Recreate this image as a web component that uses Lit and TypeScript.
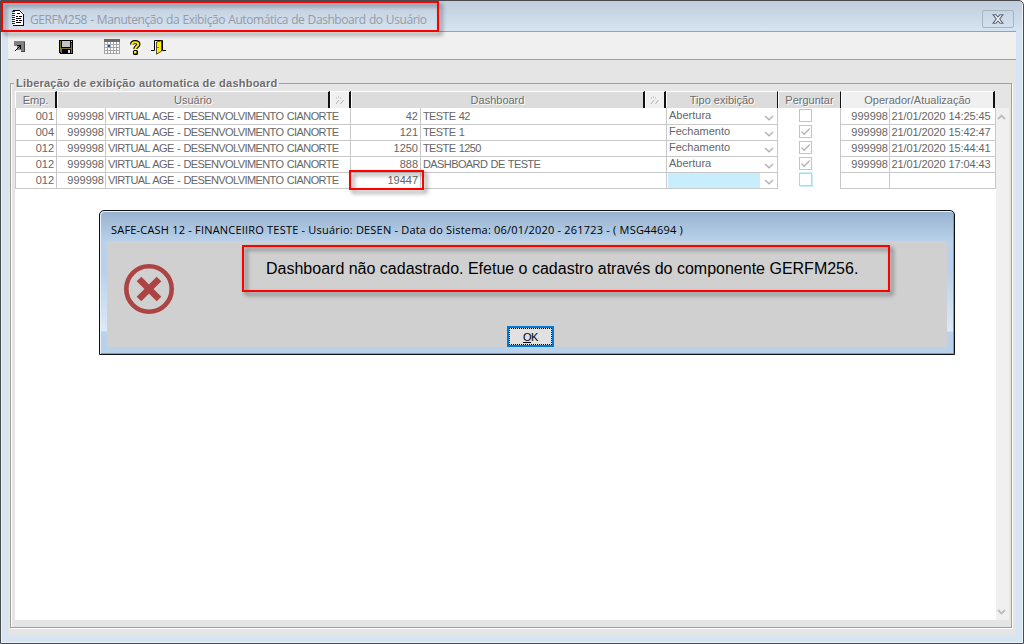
import { LitElement, html, css, svg, nothing } from "lit";
import { customElement } from "lit/decorators.js";
import { classMap } from "lit/directives/class-map.js";

interface Row {
  emp: string;
  dash: string;
  name: string;
  tipo: string;
  check: boolean;
  op: string;
  date: string;
}

const ROWS: Row[] = [
  { emp: "001", dash: "42", name: "TESTE 42", tipo: "Abertura", check: false, op: "999998", date: "21/01/2020 14:25:45" },
  { emp: "004", dash: "121", name: "TESTE 1", tipo: "Fechamento", check: true, op: "999998", date: "21/01/2020 15:42:47" },
  { emp: "012", dash: "1250", name: "TESTE 1250", tipo: "Fechamento", check: true, op: "999998", date: "21/01/2020 15:44:41" },
  { emp: "012", dash: "888", name: "DASHBOARD DE TESTE", tipo: "Abertura", check: true, op: "999998", date: "21/01/2020 17:04:43" },
  { emp: "012", dash: "19447", name: "", tipo: "", check: false, op: "", date: "" },
];

const docIcon = svg`<svg class="doc" width="14" height="17" viewBox="0 0 14 17" shape-rendering="crispEdges">
  <path d="M2 0h8v1h1v1h1v1h1v13H2z" fill="#fff"/>
  <path d="M2 0h7v1H2zM9 1h1v1H9zM10 2h1v1h-1zM11 3h1v1h-1zM12 4h1v12h-1zM2 15h11v1H2z" fill="#111"/>
  <path d="M1 1h3v1H1zM1 3h3v1H1zM1 5h3v1H1zM1 7h3v1H1zM1 9h3v1H1zM1 11h3v1H1zM1 13h3v1H1z" fill="#222"/>
  <path d="M6 3h3v1H6zM5 6h2v1H5zM8 6h3v1H8zM5 8h5v1H5zM5 10h2v1H5zM8 10h3v1H8zM5 12h5v1H5z" fill="#000"/>
</svg>`;

const cornerIcon = svg`<svg width="12" height="12" viewBox="0 0 12 12" shape-rendering="crispEdges">
  <path d="M0 0h11v11H7V9H3V5H0z" fill="#808080"/>
  <path d="M10 1h1v10h-1zM7 10h4v1H7z" fill="#444"/>
  <path d="M3 4h4v4H6V6H5v1H4v1H3v1H2v1H1V9h1V8h1V7h1V6h1V5H3z" fill="#000"/>
</svg>`;

const saveIcon = svg`<svg width="14" height="14" viewBox="0 0 14 14" shape-rendering="crispEdges">
  <path d="M0 0h14v14H1v-1H0z" fill="#000"/>
  <path d="M1 1h1v11H1zM12 3h1v10h-1zM2 8h10v1H2zM2 9h1v4H2z" fill="#77752c"/>
  <path d="M3 1h8v6H3z" fill="#c4c4c4"/><path d="M12 1h1v1h-1z" fill="#ccc"/>
  <path d="M9 10h2v3H9z" fill="#ddd"/>
</svg>`;

const calendarIcon = svg`<svg width="16" height="15" viewBox="0 0 16 15" shape-rendering="crispEdges">
  <path d="M0 0h16v15H0z" fill="#a5a5a5"/><path d="M0 0h16v3H0z" fill="#6b6b6b"/>
  ${[0, 1, 2, 3].map((r) => [0, 1, 2, 3, 4].map((c) => svg`<rect x=${1 + c * 3} y=${3 + r * 3} width="2" height="2" fill="#fff"/>`))}
  <path d="M4 6h2v2H4z" fill="#0a61ac"/>
</svg>`;

const helpIcon = svg`<svg width="11" height="15" viewBox="0 0 11 15">
  <path d="M2 4.500C2 2.600 3.400 2 5.200 2S8.500 2.800 8.500 4.500 5.300 6.800 5.300 9" fill="none" stroke="#000" stroke-width="4"/>
  <rect x="3" y="10" width="5" height="5" rx="1.500" fill="#000"/>
  <path d="M2 4.700C2 2.800 3.400 2.300 5.200 2.300S8.300 3 8.300 4.600 5.300 6.600 5.300 9" fill="none" stroke="#ffee00" stroke-width="2"/>
  <rect x="4" y="11" width="2.500" height="2.500" fill="#ffee00"/>
</svg>`;

const doorIcon = svg`<svg width="15" height="15" viewBox="0 0 15 15">
  <path d="M0 10.500h3.500V.5h8v10H15" fill="none" stroke="#000"/>
  <path d="M5.500 2l5-1.300v10.500l-5 3z" fill="#ffee00" stroke="#222" stroke-width=".8"/>
  <path d="M6.500 7.500h1" stroke="#000"/>
</svg>`;

const sparkle = svg`<svg width="10" height="9" viewBox="0 0 10 9">
  <path d="M1 2h1M3 1h1M5 2h1" stroke="#aaa"/><path d="M1 8l3-4M5.500 8l3-4" stroke="#aaa" stroke-width=".9"/>
</svg>`;

const chevron = svg`<svg class="chev" width="10" height="6" viewBox="0 0 10 6"><path d="M1 1l4 3.700L9 1" fill="none" stroke="#b2b2b2" stroke-width="1.400"/></svg>`;

@customElement("app-root")
export class AppRoot extends LitElement {
  static styles = css`
    :host { display: block; width: 1024px; height: 644px; font-family: "Liberation Sans", Arial, sans-serif; }
    * { box-sizing: border-box; }
    svg { display: block; flex: none; }
    .window {
      position: relative; height: 644px; display: flex; flex-direction: column; overflow: hidden;
      border: 1px solid #4b4a4e; border-radius: 0 5px 0 0; padding: 0 7px 7px;
      background: linear-gradient(#bfcddd, #d7e4f2 31px);
      box-shadow: inset 1px 0 #eaf1f8, inset -1px -1px #eaf1f8;
    }
    .title { height: 30px; flex: none; display: flex; align-items: center; padding: 5px 1px 0 3px; }
    .title .text { margin: 2px 0 0 5px; font: 12px/16px "Open Sans", sans-serif; color: #949ca6; white-space: nowrap; flex: 1; letter-spacing: -.42px; word-spacing: .5px; }
    .close {
      width: 32px; height: 18px; border: 1px solid #a6b3c2; border-radius: 2px; margin: 0 1px 0 0;
      display: flex; align-items: center; justify-content: center;
    }
    .client { flex: 1; display: flex; flex-direction: column; background: #e5e5e5; border-top: 1px solid #a0a0a0; }
    .toolbar { height: 28px; flex: none; background: #f0f0f0; border-bottom: 1px solid #a0a0a0; display: flex; align-items: flex-start; padding: 8px 0 0 6px; }
    .toolbar .i1 { margin: 1px 33px 0 0; }
    .toolbar .i2 { margin-right: 31px; }
    .toolbar .i3 { margin: -1px 10px 0 0; }
    .toolbar .i4 { margin-right: 10px; }
    fieldset {
      margin: 16px 4px 8px 2px; padding: 0 2px 7px 4px; flex: 1; min-width: 0; min-inline-size: 0;
      border: 1px solid #a0a0a0; box-shadow: 1px 1px #fff, inset 1px 0 #fff; display: block;
    }
    legend { font-size: 11px; line-height: 14px; font-weight: bold; letter-spacing: .225px; color: #6d6d6d; text-shadow: 1px 1px #fff; padding: 0 2px 0 2px; margin-left: -1px; white-space: nowrap; }
    .grid { display: grid; grid-template-columns: 981px 13px; grid-template-rows: 17px 512px; margin-top: 1px; }
    .head { display: grid; grid-template-columns: 42px 273px 21px 294px 21px 112px 63px 154px; }
    .h {
      background: #dcdcdc; border: 1px solid #a0a0a0; border-top-color: #fff; border-left-color: #fff; border-right: 2px solid #111;
      font-size: 11px; line-height: 16px; color: #6d6d6d; text-align: center; text-shadow: 1px 1px #fff; white-space: nowrap;
      display: flex; justify-content: center;
    }
    .h.btn { background: #f0f0f0; align-items: center; }
    .h.dark { border-bottom: 2px solid #222; border-right-width: 1px; }
    .h.light { background: #f0f0f0; }
    .corner { background: #e5e5e5; }
    .body { background: #fff; }
    .row { display: grid; height: 16px; grid-template-columns: 42px 49px 245px 70px 246px 111px 63px 49px 106px; font-size: 11px; line-height: 16px; color: #666; white-space: nowrap; }
    .row.last { height: 17px; }
    .c { border-right: 1px solid #c8c8c8; border-bottom: 1px solid #c8c8c8; padding: 0 2px; }
    .c:first-child { box-shadow: inset 1px 0 #c8c8c8; }
    .num { text-align: right; }
    .op { padding-right: 1px; }
    .caps { letter-spacing: -.6px; word-spacing: .85px; padding-left: 2px; }
    .date { letter-spacing: -.1px; padding-left: 1.500px; }
    .tipo { border-bottom: 0; box-shadow: inset 0 1px #c8c8c8; display: flex; justify-content: space-between; align-items: center; padding: 1px 3px 0 1px; }
    .tipo span { margin: -5px 0 0 1px; flex: 1; }
    .tipo .chev { margin-top: 2px; }
    .row:first-child .tipo { box-shadow: none; }
    .last .tipo { border-bottom: 1px solid #c8c8c8; }
    .last .tipo span { align-self: stretch; background: #c8eefe; margin: 0 4px 0 0; }
    .perg { border-bottom: 0; display: flex; padding: 1px 0 0 21px; }
    .box { width: 13px; height: 13px; border: 1px solid #c4c4c4; background: #fff; }
    .last .box { border-color: #b4d4e2; box-shadow: 1px 1px #c8eefe, 0 -1px #c8eefe; }
    .scroll { background: #f0f0f0; display: flex; flex-direction: column; justify-content: space-between; padding: 6px 0 5px 1px; }
    .mark { position: absolute; border: 2px solid #fe0000; filter: drop-shadow(3px 3px 2px rgba(0, 0, 0, .5)); }
    .mark-title { left: 0; top: 0; width: 438px; height: 31px; }
    .mark-code { left: 348px; top: 169px; width: 75px; height: 20px; }
    .mark-message { left: 241px; top: 244px; width: 648px; height: 47px; }
    .dialog {
      position: absolute; left: 98px; top: 209px; width: 856px; height: 145px; border: 1px solid #111; border-radius: 5px 5px 0 0;
      padding: 0 7px 7px; display: flex; flex-direction: column; overflow: hidden;
      box-shadow: inset 1px 1px #e8f1fa, inset -1px -1px #35bcd6;
      background: linear-gradient(#99b4d1 0 2px, #b9d1ea 30px, #b9d1ea 60px, #dce9f7 120px, #b9d1ea 121px);
    }
    .dtitle { height: 30px; flex: none; font: 11px/16px "Open Sans", sans-serif; letter-spacing: .2px; color: #000; padding: 11px 0 0 4px; white-space: nowrap; }
    .dbody { flex: 1; background: #d0d0d0; display: grid; grid-template-columns: 158px 1fr; grid-template-rows: 85px 21px; }
    .err { margin: 22px 0 0 16px; }
    .msg { font-size: 16px; line-height: 20px; color: #000; padding: 18px 0 0 1px; white-space: nowrap; }
    .ok {
      grid-column: 1 / 3; justify-self: start; margin-left: 400px; width: 47px; height: 21px; border: 2px solid #0078d7; background: #e1e1e1; padding: 1px 0 0;
      font: 11px/15px "Liberation Sans", sans-serif; letter-spacing: -.5px; color: #000; outline: 1px dotted #000; outline-offset: -3px; border-radius: 0;
    }
  `;

  private renderRow(r: Row, last: boolean) {
    return html`<div class=${classMap({ row: true, last })}>
      <div class="c num">${r.emp}</div>
      <div class="c num op">999998</div>
      <div class="c caps">VIRTUAL AGE - DESENVOLVIMENTO CIANORTE</div>
      <div class="c num">${r.dash}</div>
      <div class="c caps">${r.name}</div>
      <div class="c tipo"><span>${r.tipo}</span>${chevron}</div>
      <div class="c perg"><div class="box">${r.check
        ? svg`<svg width="11" height="11" viewBox="0 0 11 11"><path d="M1.500 5.500l2.700 2.700L9.700 2.500" fill="none" stroke="#b2b2b2" stroke-width="1.300"/></svg>`
        : nothing}</div></div>
      <div class="c num op">${r.op}</div>
      <div class="c date">${r.date}</div>
    </div>`;
  }

  render() {
    return html`<div class="window">
      <div class="title">
        ${docIcon}<span class="text">GERFM258 - Manutenção da Exibição Automática de Dashboard do Usuário</span>
        <div class="close"><svg width="12" height="10" viewBox="0 0 12 10">
          <path d="M1 .7h3l2 2.300 2-2.300h3L7.700 5 11 9.300H8L6 7 4 9.300H1L4.300 5z" fill="#f4f6f8" stroke="#5d6671" stroke-width="1.100"/></svg></div>
      </div>
      <div class="client">
        <div class="toolbar">
          <div class="i1">${cornerIcon}</div><div class="i2">${saveIcon}</div><div class="i3">${calendarIcon}</div>
          <div class="i4">${helpIcon}</div><div>${doorIcon}</div>
        </div>
        <fieldset>
          <legend>Liberação de exibição automatica de dashboard</legend>
          <div class="grid">
            <div class="head">
              <div class="h">Emp.</div><div class="h">Usuário</div><div class="h btn">${sparkle}</div>
              <div class="h">Dashboard</div><div class="h btn">${sparkle}</div>
              <div class="h dark">Tipo exibição</div><div class="h dark">Perguntar</div><div class="h light">Operador/Atualização</div>
            </div>
            <div class="corner"></div>
            <div class="body">${ROWS.map((r, i) => this.renderRow(r, i === ROWS.length - 1))}</div>
            <div class="scroll">
              <svg width="9" height="6" viewBox="0 0 9 6"><path d="M1 5l3.500-3.500L8 5" fill="none" stroke="#bdbdbd" stroke-width="1.900"/></svg>
              <svg width="9" height="6" viewBox="0 0 9 6"><path d="M1 1l3.500 3.500L8 1" fill="none" stroke="#bdbdbd" stroke-width="1.900"/></svg>
            </div>
          </div>
        </fieldset>
      </div>
      <div class="dialog">
        <div class="dtitle">SAFE-CASH 12 - FINANCEIIRO TESTE - Usuário: DESEN - Data do Sistema: 06/01/2020 - 261723 - ( MSG44694 )</div>
        <div class="dbody">
          <svg class="err" width="52" height="52" viewBox="0 0 52 52">
            <circle cx="26" cy="26" r="22.700" fill="none" stroke="#ac4444" stroke-width="4.600"/>
            <path d="M16 16l20 20M36 16L16 36" stroke="#ac4444" stroke-width="6.500"/>
          </svg>
          <div class="msg">Dashboard não cadastrado. Efetue o cadastro através do componente GERFM256.</div>
          <button class="ok"><u>O</u>K</button>
        </div>
      </div>
      <div class="mark mark-title"></div>
      <div class="mark mark-code"></div>
      <div class="mark mark-message"></div>
    </div>`;
  }
}
